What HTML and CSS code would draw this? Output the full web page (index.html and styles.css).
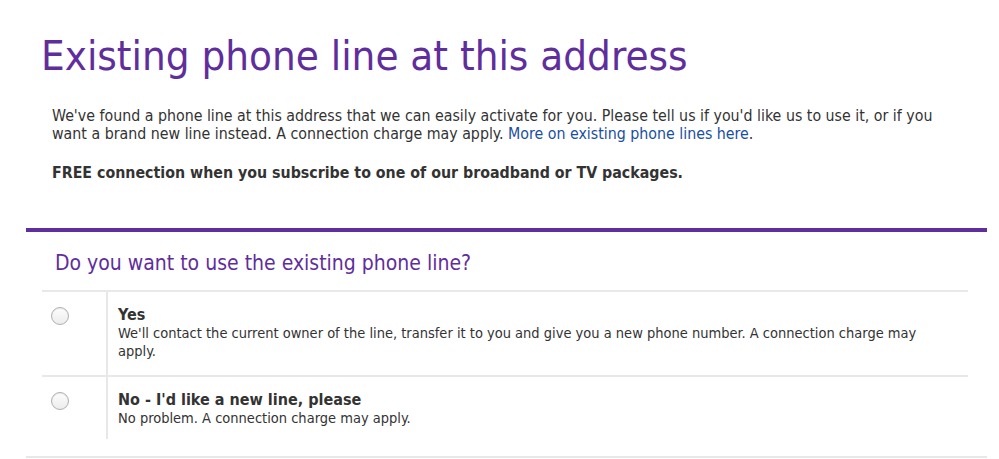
FILE: index.html
```html
<!DOCTYPE html>
<html lang="en">
<head>
<meta charset="utf-8">
<title>Existing phone line</title>
<link rel="stylesheet" href="styles.css">
</head>
<body>
<div class="page">
  <h1 class="title">Existing phone line at this address</h1>
  <div class="intro">
    <p class="lead">We've found a phone line at this address that we can easily activate for you. Please tell us if you'd like us to use it, or if you want a brand new line instead. A connection charge may apply. <a href="#" class="link">More on existing phone lines here</a>.</p>
    <p class="free">FREE connection when you subscribe to one of our broadband or TV packages.</p>
  </div>
  <section class="question">
    <h2 class="q-title">Do you want to use the existing phone line?</h2>
    <div class="options">
      <label class="option">
        <span class="opt-radio"><span class="radio"></span></span>
        <span class="opt-body">
          <span class="opt-label">Yes</span>
          <span class="opt-desc">We'll contact the current owner of the line, transfer it to you and give you a new phone number. A connection charge may apply.</span>
        </span>
      </label>
      <label class="option">
        <span class="opt-radio"><span class="radio"></span></span>
        <span class="opt-body">
          <span class="opt-label">No - I'd like a new line, please</span>
          <span class="opt-desc">No problem. A connection charge may apply.</span>
        </span>
      </label>
    </div>
  </section>
</div>
</body>
</html>
```

FILE: styles.css
```css
html, body {
  margin: 0;
  padding: 0;
  background: #fff;
}
body {
  font-family: "DejaVu Sans Condensed", "DejaVu Sans", sans-serif;
  color: #333;
}
.page {
  padding: 28px 12px 0 26px;
}
.title {
  margin: 0 0 0 15px;
  font-size: 41.7px;
  line-height: 55px;
  font-weight: normal;
  color: #5f2e9c;
}
.intro {
  padding: 24px 0 0 26px;
}
.lead {
  margin: 0;
  font-size: 15.8px;
  line-height: 18px;
  width: 900px;
}
.link {
  color: #1a4f9f;
  text-decoration: none;
}
.free {
  margin: 21px 0 0;
  font-size: 15.8px;
  line-height: 18px;
  font-weight: bold;
}
.question {
  margin-top: 46px;
  border-top: 4px solid #5f2e9c;
  border-bottom: 2px solid #e8e8e8;
  padding: 0 19px 17px 16px;
}
.q-title {
  margin: 0;
  padding: 18px 0 0 13px;
  font-size: 21px;
  line-height: 27px;
  font-weight: normal;
  color: #5f2e9c;
}
.options {
  margin-top: 13px;
}
.option {
  display: flex;
  border-top: 2px solid #e8e8e8;
  cursor: pointer;
}
.opt-radio {
  width: 66px;
  flex: none;
  padding: 15px 0 0 9px;
  box-sizing: border-box;
  border-right: 2px solid #e8e8e8;
  margin-right: 10px;
}
.radio {
  display: block;
  width: 16px;
  height: 16px;
  border-radius: 50%;
  border: 1px solid #b0b0b0;
  background: linear-gradient(#fdfdfd, #ececec);
  box-shadow: inset 0 1px 1px rgba(0,0,0,0.08);
}
.opt-body {
  display: flex;
  flex-direction: column;
  padding: 14px 0 15px;
  font-size: 14.5px;
  line-height: 18px;
}
.opt-label {
  font-weight: bold;
  font-size: 16px;
  line-height: 18px;
}
.opt-desc {
  width: 820px;
}
.option + .option .opt-body {
  padding-bottom: 12px;
}
```
